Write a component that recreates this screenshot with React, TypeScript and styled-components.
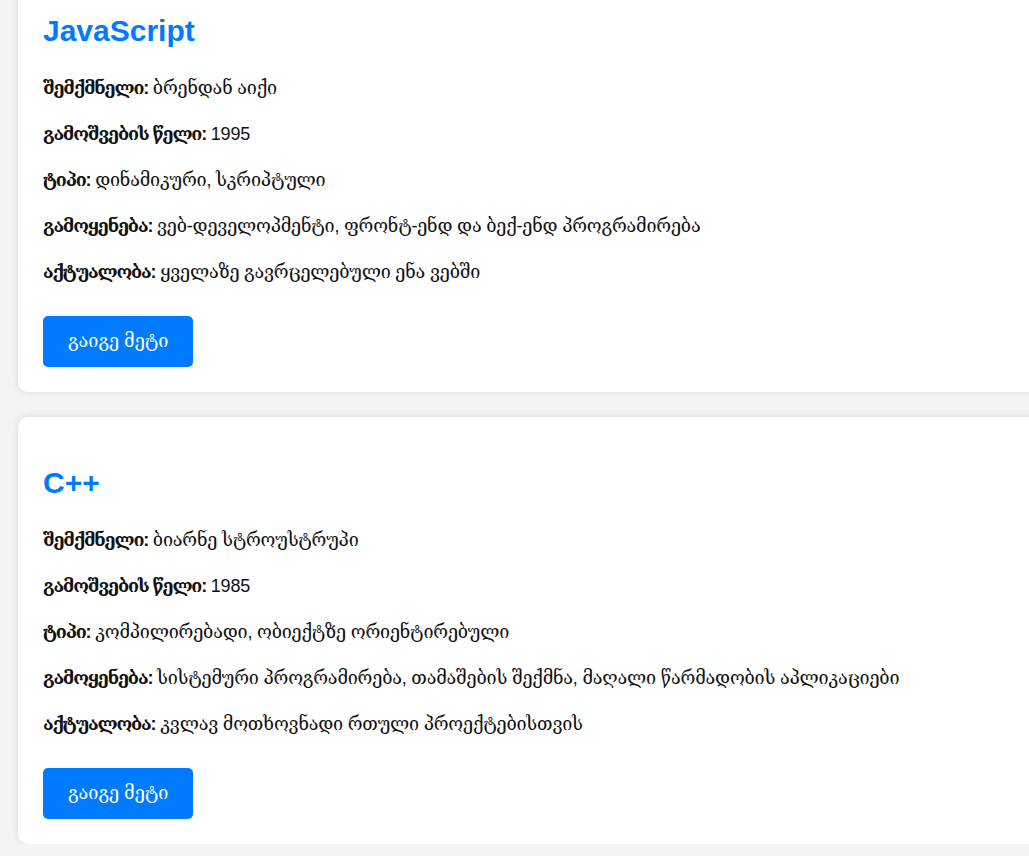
import React from "react";
import styled, { createGlobalStyle } from "styled-components";

const GlobalStyle = createGlobalStyle`
  html, body {
    margin: 0;
    padding: 0;
    overflow: hidden;
    background: #f4f4f4;
  }
  body {
    font-family: "Liberation Sans", "DejaVu Serif", sans-serif;
    color: #111;
  }
`;

const Page = styled.main`
  display: flex;
  flex-direction: column;
  gap: 25px;
  width: 1100px;
  margin-top: -35px;
  padding-left: 18px;
`;

const Card = styled.section`
  background: #fff;
  border-radius: 10px;
  box-shadow: 0 0 10px rgba(0, 0, 0, 0.1);
  padding: 25px;
  display: flex;
  flex-direction: column;
  align-items: flex-start;
`;

const Title = styled.h2`
  margin: 23px 0 26px;
  font-size: 30px;
  line-height: 36px;
  font-weight: bold;
  color: #007bff;
`;

const Details = styled.div`
  display: flex;
  flex-direction: column;
  gap: 20px;
`;

const Row = styled.p`
  margin: 0;
  font-size: 18px;
  line-height: 26px;
  letter-spacing: -0.2px;
`;

const Label = styled.strong`
  font-weight: bold;
  letter-spacing: -1.2px;
`;

const Button = styled.button`
  margin-top: 31px;
  border: none;
  border-radius: 5px;
  background: #007bff;
  color: #fff;
  font-family: inherit;
  font-size: 18px;
  line-height: 27px;
  padding: 12px 25px;
  cursor: pointer;
`;

type Lang = {
  name: string;
  creator: string;
  year: string;
  type: string;
  usage: string;
  relevance: string;
};

const langs: Lang[] = [
  {
    name: "JavaScript",
    creator: "ბრენდან აიქი",
    year: "1995",
    type: "დინამიკური, სკრიპტული",
    usage: "ვებ-დეველოპმენტი, ფრონტ-ენდ და ბექ-ენდ პროგრამირება",
    relevance: "ყველაზე გავრცელებული ენა ვებში",
  },
  {
    name: "C++",
    creator: "ბიარნე სტროუსტრუპი",
    year: "1985",
    type: "კომპილირებადი, ობიექტზე ორიენტირებული",
    usage: "სისტემური პროგრამირება, თამაშების შექმნა, მაღალი წარმადობის აპლიკაციები",
    relevance: "კვლავ მოთხოვნადი რთული პროექტებისთვის",
  },
];

export default function App() {
  return (
    <>
      <GlobalStyle />
      <Page>
        {langs.map((l) => (
          <Card key={l.name}>
            <Title>{l.name}</Title>
            <Details>
              <Row>
                <Label>შემქმნელი:</Label> {l.creator}
              </Row>
              <Row>
                <Label>გამოშვების წელი:</Label> {l.year}
              </Row>
              <Row>
                <Label>ტიპი:</Label> {l.type}
              </Row>
              <Row>
                <Label>გამოყენება:</Label> {l.usage}
              </Row>
              <Row>
                <Label>აქტუალობა:</Label> {l.relevance}
              </Row>
            </Details>
            <Button>გაიგე მეტი</Button>
          </Card>
        ))}
      </Page>
    </>
  );
}
